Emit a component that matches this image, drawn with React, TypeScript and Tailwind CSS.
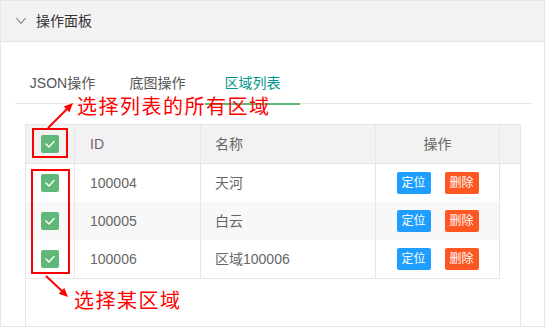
import React from "react";

interface Area {
  id: string;
  name: string;
}

const areas: Area[] = [
  { id: "100004", name: "天河" },
  { id: "100005", name: "白云" },
  { id: "100006", name: "区域100006" },
];

const tabs = ["JSON操作", "底图操作", "区域列表"];

function CheckBox() {
  return (
    <div className="w-[18px] h-[18px] rounded-[2px] bg-[#5fb878] flex items-center justify-center">
      <svg width="18" height="18" viewBox="0 0 18 18" fill="none">
        <polyline points="5,9 8,12 13,6.5" stroke="#fff" strokeWidth="1.4" strokeLinecap="round" strokeLinejoin="round" />
      </svg>
    </div>
  );
}

export default function App() {
  return (
    <div
      className="relative w-[545px] h-[327px] overflow-hidden border border-[#e6e6e6] bg-white text-[14px] text-[#666]"
      style={{ fontFamily: '"Liberation Sans", "Noto Sans CJK SC", sans-serif' }}
    >
      {/* panel title */}
      <div className="h-[41px] bg-[#f2f2f2] border-b border-[#e6e6e6] flex items-center pl-[15px]">
        <svg width="10" height="8" viewBox="0 0 10 8" fill="none">
          <polyline points="0.5,1 5,6.5 9.5,1" stroke="#777" strokeWidth="1.1" />
        </svg>
        <span className="ml-[10px] text-[#333]">操作面板</span>
      </div>

      <div className="pt-[21px] pl-[14px] pr-[12px]">
        {/* tabs */}
        <div className="flex h-[41px] border-b border-[#e6e6e6]">
          {tabs.map((t, i) => (
            <div
              key={t}
              className={`relative w-[95px] h-[40px] flex items-center justify-center ${
                i === 2 ? "text-[#009688]" : "text-[#555]"
              }`}
            >
              {t}
              {i === 2 && <span className="absolute left-0 right-0 bottom-[-2px] h-[2px] bg-[#5fb878]" />}
            </div>
          ))}
        </div>

        {/* table */}
        <div className="ml-[10px] mt-[20px] w-[496px] h-[260px] border border-[#e6e6e6]">
          <div className="flex h-[39px] bg-[#f2f2f2] border-b border-[#e6e6e6]">
            <div className="w-[49px] border-r border-[#e6e6e6] flex items-center justify-center">
              <CheckBox />
            </div>
            <div className="w-[126px] border-r border-[#e6e6e6] flex items-center pl-[15px]">ID</div>
            <div className="w-[175px] border-r border-[#e6e6e6] flex items-center pl-[14px]">名称</div>
            <div className="w-[124px] border-r border-[#e6e6e6] flex items-center justify-center">操作</div>
            <div className="flex-1" />
          </div>

          <div className="w-[474px] border-r border-b border-[#e6e6e6]">
            {areas.map((a, i) => (
              <div key={a.id} className={`flex h-[38px] ${i === 1 ? "bg-[#f8f8f8]" : "bg-white"}`}>
                <div className="w-[49px] border-r border-[#e6e6e6] flex items-center justify-center">
                  <CheckBox />
                </div>
                <div className="w-[126px] border-r border-[#e6e6e6] flex items-center pl-[15px]">{a.id}</div>
                <div className="w-[175px] border-r border-[#e6e6e6] flex items-center pl-[14px]">{a.name}</div>
                <div className="flex-1 flex items-center justify-center gap-[14px]">
                  <button className="w-[34px] h-[22px] rounded-[2px] bg-[#1e9fff] text-white text-[12px] leading-[22px]">
                    定位
                  </button>
                  <button className="w-[34px] h-[22px] rounded-[2px] bg-[#ff5722] text-white text-[12px] leading-[22px]">
                    删除
                  </button>
                </div>
              </div>
            ))}
          </div>
        </div>
      </div>

      {/* annotations */}
      <div className="absolute left-[31px] top-[127px] w-[36px] h-[30px] border-2 border-[#ff0000]" />
      <div className="absolute left-[30px] top-[168px] w-[39px] h-[105px] border-2 border-[#ff0000]" />
      <svg className="absolute left-[-1px] top-[-1px] pointer-events-none" width="545" height="327" viewBox="0 0 545 327">
        <line x1="48" y1="128" x2="67" y2="109" stroke="#ff0000" strokeWidth="2" />
        <polygon points="73,103 69.4,112.2 63.8,106.6" fill="#ff0000" />
        <line x1="46" y1="276" x2="62" y2="291" stroke="#ff0000" strokeWidth="2" />
        <polygon points="68,297 58.7,293.7 64.3,287.9" fill="#ff0000" />
      </svg>
      <div
        className="absolute left-[76px] top-[95px] text-[20px] leading-[20px] tracking-[1.5px] text-[#ff0000]"
        style={{ fontFamily: '"Noto Sans CJK SC", sans-serif' }}
      >
        选择列表的所有区域
      </div>
      <div
        className="absolute left-[73px] top-[289px] text-[20px] leading-[20px] tracking-[1.5px] text-[#ff0000]"
        style={{ fontFamily: '"Noto Sans CJK SC", sans-serif' }}
      >
        选择某区域
      </div>
    </div>
  );
}
